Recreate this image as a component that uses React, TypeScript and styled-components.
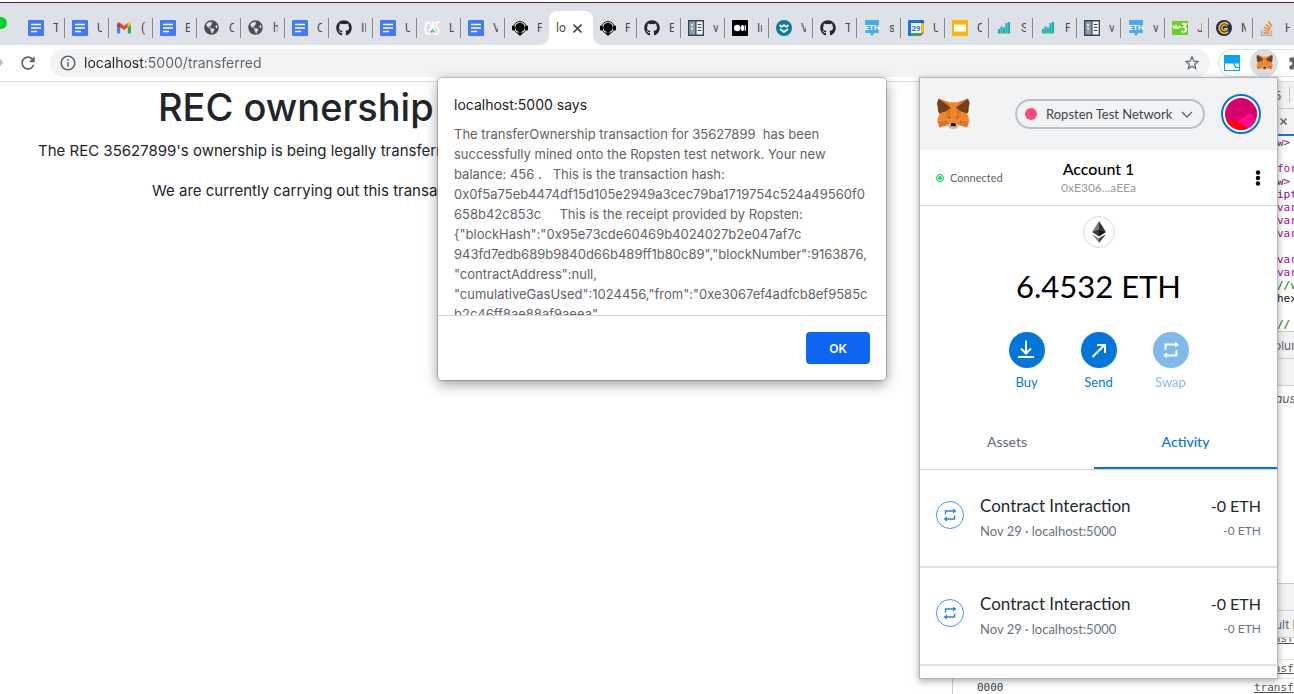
import React from 'react';
import styled, { createGlobalStyle } from 'styled-components';
import { FaGithub, FaGlobeAmericas } from 'react-icons/fa';
import { MdStarBorder, MdRefresh, MdInfoOutline, MdExtension } from 'react-icons/md';

const GlobalStyle = createGlobalStyle`
  *, *::before, *::after { box-sizing: border-box; }
  body { margin: 0; background: #fff; font-family: Inter, "Liberation Sans", sans-serif; overflow: hidden; }
  button { font: inherit; border: 0; padding: 0; background: none; cursor: pointer; }
  svg { display: block; flex: none; }
`;

/* ---------- browser frame ---------- */

const Browser = styled.div`
  position: relative;
  display: flex;
  flex-direction: column;
  height: 100vh;
  overflow: hidden;
`;

const TabStrip = styled.header`
  flex: none;
  display: flex;
  align-items: flex-end;
  height: 45px;
  overflow: hidden;
  border-top: 2px solid #fff;
  background: #dee1e7;
  box-shadow: inset 0 1px #45282f;
`;

const WindowControls = styled.div`
  flex: none;
  align-self: center;
  width: 21px;
  height: 14px;
  overflow: hidden;

  &::before {
    content: '';
    display: block;
    width: 12px;
    height: 12px;
    margin-left: -5px;
    border-radius: 50%;
    background: #05cf2b;
  }
`;

const Tab = styled.button<{ $divider: boolean }>`
  flex: none;
  display: flex;
  align-items: center;
  gap: 9px;
  width: 44px;
  height: 34px;
  padding-left: 7px;
  color: #4a4d52;
  font-family: Roboto, "Liberation Sans", sans-serif;
  font-size: 12px;

  &::after {
    content: '';
    width: 1px;
    height: 20px;
    margin-left: auto;
    background: ${(p) => (p.$divider ? '#85888d' : 'transparent')};
  }
`;

const TabTitle = styled.span`
  width: 5px;
  margin-right: -9px;
  overflow: hidden;
  text-align: left;
  white-space: nowrap;
`;

const ActiveTab = styled.div`
  position: relative;
  flex: none;
  display: flex;
  align-items: center;
  gap: 7px;
  width: 44px;
  height: 34px;
  padding-left: 7px;
  border-radius: 8px 8px 0 0;
  background: #fff;
  color: #45484d;
  font-family: Roboto, "Liberation Sans", sans-serif;
  font-size: 12px;

  &::before, &::after {
    content: '';
    position: absolute;
    bottom: 0;
    width: 8px;
    height: 8px;
  }
  &::before { right: 100%; background: radial-gradient(circle at 0 0, transparent 7px, #fff 8px); }
  &::after { left: 100%; background: radial-gradient(circle at 100% 0, transparent 7px, #fff 8px); }
`;

const Toolbar = styled.div`
  flex: none;
  display: flex;
  align-items: center;
  height: 37px;
  padding-bottom: 1px;
  border-bottom: 1px solid #d9dbdd;
  color: #5f6368;
`;

const Forward = styled.span`
  width: 18px;
  height: 8px;

  &::before {
    content: '';
    display: block;
    width: 3px;
    height: 8px;
    background: #b9bbbe;
    clip-path: polygon(0 0, 100% 50%, 0 100%);
  }
`;

const Omnibox = styled.div`
  flex: 1;
  display: flex;
  align-items: center;
  height: 28px;
  margin: 0 8px 0 12px;
  padding: 0 9px;
  border-radius: 14px;
  background: #f1f3f4;
`;

const Url = styled.input`
  flex: 1;
  min-width: 0;
  margin-left: 7px;
  padding: 0;
  border: 0;
  outline: 0;
  font: 14px Inter, sans-serif;
  color: transparent;
  background: linear-gradient(to right, #202124 60px, #5f6368 60px);
  background-clip: text;
  -webkit-background-clip: text;
`;

const Extensions = styled.div`
  display: flex;
  align-items: center;
  gap: 9px;
  width: 76px;
  height: 28px;
  padding-left: 4px;
  overflow: hidden;
  border: 1px solid #dfe1e5;
  border-right: 0;
  border-radius: 14px 0 0 14px;
`;

const Extension = styled.button<{ $open?: boolean }>`
  flex: none;
  display: grid;
  place-items: center;
  width: ${(p) => (p.$open ? '28px' : '18px')};
  height: 28px;
  border-radius: 50%;
  background: ${(p) => (p.$open ? '#dcdddf' : 'none')};
  color: #5f6368;
`;

/* ---------- page ---------- */

const Viewport = styled.div`
  flex: 1;
  display: flex;
  min-height: 0;
`;

const Page = styled.main`
  flex: 1;
  min-width: 0;
  padding-top: 1px;
  overflow: hidden;
  color: #212529;
  white-space: nowrap;
`;

const Title = styled.h1`
  margin: 0 0 8px;
  padding-left: 158px;
  font-size: 38px;
  font-weight: 500;
  line-height: 48px;
`;

const Text = styled.p<{ $indent: number }>`
  margin: 0 0 16px;
  padding-left: ${(p) => p.$indent}px;
  font-size: 15px;
  line-height: 24px;
`;

/* ---------- developer tools ---------- */

const DevTools = styled.aside`
  flex: none;
  display: flex;
  flex-direction: column;
  width: 342px;
  overflow: hidden;
  border-left: 1px solid #cacdd1;
  color: #5f6368;
  font-size: 12px;
  white-space: nowrap;
`;

const Bar = styled.div<{ $height: number; $pad: number }>`
  flex: none;
  display: flex;
  align-items: center;
  gap: 8px;
  height: ${(p) => p.$height}px;
  padding-left: ${(p) => p.$pad}px;
  border-bottom: 1px solid #cacdd1;
  background: #f3f3f3;
`;

const BarRule = styled.span`
  width: 1px;
  height: 16px;
  background: #c4c6ca;
`;

const FileTab = styled(Bar)`
  border-bottom: 2px solid #1a73e8;
`;

const Code = styled.pre`
  flex: none;
  height: 196px;
  margin: 0;
  padding-left: 324px;
  overflow: hidden;
  border-bottom: 1px solid #cacdd1;
  color: #202124;
  font: 11px/13px "DejaVu Sans Mono", monospace;
`;

const CodeLine = styled.span<{ $kind: string }>`
  display: block;
  height: 13px;
  color: ${(p) => ({ tag: '#881280', key: '#aa0d91', note: '#007400', plain: '#202124' })[p.$kind]};
`;

const Paused = styled.div`
  flex: none;
  height: 198px;
  padding: 5px 0 0 322px;
  border-bottom: 1px solid #cacdd1;
  font-style: italic;
  line-height: 16px;
`;

const LogRow = styled.div<{ $clipped?: boolean }>`
  flex: none;
  display: flex;
  justify-content: space-between;
  height: ${(p) => (p.$clipped ? '22px' : '19px')};
  padding: 0 0 0 24px;
  overflow: hidden;
  border-bottom: 1px solid #e4e4e4;
  color: #303942;
  font: 11px/18px "DejaVu Sans Mono", monospace;
  line-height: ${(p) => (p.$clipped ? '2px' : '18px')};

  a { width: 40px; color: #545454; }
`;

/* ---------- alert ---------- */

const Alert = styled.section`
  position: absolute;
  top: 78px;
  left: calc(50% - 209px);
  width: 448px;
  border-radius: 4px;
  background: #fff;
  box-shadow: 0 0 1px 1px rgba(0, 0, 0, 0.22), 0 4px 14px rgba(0, 0, 0, 0.4);
`;

const AlertTitle = styled.h2`
  margin: 0;
  padding: 17px 16px 9px;
  color: #202124;
  font-size: 14px;
  font-weight: 400;
  line-height: 20px;
`;

const AlertBody = styled.div`
  height: 192px;
  padding: 0 16px;
  overflow: hidden;
  border-bottom: 1px solid #d4d6d9;
  color: #5f6368;
  font-size: 13px;
  line-height: 20px;
  white-space: pre;
`;

const AlertActions = styled.div`
  display: flex;
  justify-content: flex-end;
  padding: 16px;
`;

const OkButton = styled.button`
  width: 64px;
  height: 32px;
  border-radius: 4px;
  background: #0d66f2;
  color: #fff;
  font-size: 12px;
  font-weight: 600;
`;

/* ---------- wallet popup ---------- */

const Wallet = styled.section`
  position: absolute;
  top: 77px;
  right: 16px;
  width: 359px;
  height: 602px;
  border: 1px solid #b3b5b7;
  background: #fff;
  color: #000;
  font-family: Lato, "Liberation Sans", sans-serif;
  box-shadow: 0 2px 7px rgba(0, 0, 0, 0.35);
`;

const WalletHeader = styled.header`
  display: flex;
  align-items: center;
  height: 72px;
  padding: 0 16px;
  background: #f2f3f4;
`;

const Network = styled.label`
  display: flex;
  align-items: center;
  width: 190px;
  height: 30px;
  margin: 0 16px 0 auto;
  padding: 0 10px 0 8px;
  border: 2px solid #bbc0c5;
  border-radius: 15px;

  &::before {
    content: '';
    width: 12px;
    height: 12px;
    border-radius: 50%;
    background: #ff4a78;
  }

  select {
    flex: 1;
    appearance: none;
    margin: 0;
    padding: 0 0 0 9px;
    border: 0;
    outline: 0;
    background: none;
    color: #3f464c;
    font: 13px Lato, sans-serif;
  }
`;

const Avatar = styled.button`
  display: grid;
  place-items: center;
  width: 40px;
  height: 40px;
  border: 2px solid #0376d9;
  border-radius: 50%;
  background: #fff;
`;

const AccountBar = styled.div`
  display: grid;
  grid-template-columns: 1fr auto 1fr;
  align-items: center;
  height: 56px;
  padding: 0 16px;
  border-bottom: 1px solid #d2d4d6;
`;

const Connected = styled.span`
  display: flex;
  align-items: center;
  gap: 6px;
  color: #5f666d;
  font-size: 11px;

  &::before {
    content: '';
    width: 8px;
    height: 8px;
    border: 1px solid #1fd660;
    border-radius: 50%;
    background: #1fd660;
    box-shadow: inset 0 0 0 1px #fff;
  }
`;

const Account = styled.button`
  text-align: center;
  font-size: 16px;
  font-weight: 500;
  line-height: 20px;

  small { display: block; color: #989a9d; font-size: 12px; font-weight: 400; line-height: 18px; }
`;

const More = styled.button`
  justify-self: end;
  width: 6px;
`;

const Overview = styled.div`
  display: flex;
  flex-direction: column;
  align-items: center;
  padding-top: 10px;
`;

const Token = styled.div`
  display: grid;
  place-items: center;
  width: 32px;
  height: 32px;
  border: 1px solid #d8dadc;
  border-radius: 50%;
`;

const Balance = styled.div`
  margin: 18px 0 26px;
  font-size: 31px;
  line-height: 40px;
`;

const Actions = styled.div`
  display: flex;
`;

const Action = styled.button<{ $muted?: boolean }>`
  display: flex;
  flex-direction: column;
  align-items: center;
  gap: 4px;
  width: 72px;
  color: #0376d9;
  font-size: 13px;
  line-height: 20px;
  opacity: ${(p) => (p.$muted ? 0.5 : 1)};
`;

const WalletTabs = styled.div`
  display: flex;
  margin-top: 23px;
  border-bottom: 1px solid #d2d4d6;
`;

const WalletTab = styled.button<{ $active?: boolean }>`
  flex: ${(p) => (p.$active ? '183 0 0' : '174 0 0')};
  height: 54px;
  border-bottom: 2px solid ${(p) => (p.$active ? '#0376d9' : 'transparent')};
  color: ${(p) => (p.$active ? '#0376d9' : '#6a737d')};
  font-size: 14px;
  font-weight: 500;
`;

const Activity = styled.article`
  display: flex;
  height: 98px;
  padding: 24px 16px 0;
  border-bottom: 2px solid #e2e3e4;
`;

const Badge = styled.div`
  display: grid;
  place-items: center;
  width: 28px;
  height: 28px;
  margin: 7px 16px 0 0;
  border: 1px solid #4a90f2;
  border-radius: 50%;
  color: #2f80ed;
`;

const Lines = styled.div<{ $right?: boolean }>`
  margin-left: ${(p) => (p.$right ? 'auto' : 0)};
  text-align: ${(p) => (p.$right ? 'right' : 'left')};
  color: #24292e;
  font-size: ${(p) => (p.$right ? '16px' : '17px')};
  line-height: 24px;

  small { display: block; color: #6a737d; font-size: ${(p) => (p.$right ? '12px' : '13px')}; line-height: 26px; }
`;

/* ---------- drawings ---------- */

const FOX: [string, string][] = [
  ['#E17726', 'M32.958 1l-13.134 9.718 2.442-5.727z'],
  ['#E27625', 'M2.663 1l13.017 9.809-2.325-5.818zM28.23 23.533l-3.495 5.338 7.483 2.06 2.143-7.282zM1.273 23.65l2.13 7.282 7.47-2.06-3.482-5.339zM10.47 14.515l-2.079 3.13 7.405.338-.247-7.97zM25.151 14.515l-5.16-4.593-.169 8.06 7.405-.336zM10.873 28.871l4.482-2.164-3.86-3.006zM20.265 26.707l4.47 2.164-.61-5.17z'],
  ['#D5BFB2', 'M24.735 28.871l-4.47-2.164.364 2.904-.039 1.231zM10.873 28.871l4.158 1.97-.026-1.23.35-2.904z'],
  ['#F5841F', 'M32.049 16.52l-6.898-2.009 2.078 3.13-3.09 6.055 4.106-.052h6.13zM10.47 14.515l-6.898 2.01-2.3 7.124h6.119l4.105.052-3.09-6.055zM19.824 17.983l.442-7.593 2-5.403h-8.911l2 5.403.442 7.593.169 2.388.013 5.882h3.676l.013-5.882z'],
  ['#E8761B', 'M27.229 17.645l-7.405.338.689 3.8 1.091-2.29 2.65 1.205zM11.38 20.698l2.637-1.205 1.091 2.29.69-3.8-7.407-.337zM8.391 17.645l3.09 6.052-.104-2.999zM24.255 20.698l-.117 2.999 3.09-6.052zM15.797 17.983l-.689 3.8.87 4.476.195-5.896zM19.824 17.983l-.363 2.367.182 5.91.87-4.476z'],
  ['#CC6228', 'M10.873 28.871l.65-5.338-4.132.117zM24.098 23.533l.637 5.338 3.495-5.221z'],
  ['#F5841F', 'M20.513 21.784l-.87 4.476.622.448 3.86-3.007.117-3zM11.38 20.698l.104 2.999 3.86 3.007.624-.448-.87-4.476z'],
  ['#7a4a2a', 'M15.108 21.784l-3.728-1.086 2.637-1.205zM20.513 21.784l1.091-2.291 2.65 1.205z'],
  ['#C0AC9D', 'M20.59 30.842l.039-1.231-.338-.285h-4.962l-.325.285.026 1.23-4.158-1.97 1.455 1.193 2.949 2.035h5.053l2.962-2.035 1.442-1.192z'],
  ['#161616', 'M20.265 26.707l-.623-.448h-3.676l-.623.448-.35 2.904.325-.285h4.962l.338.285z'],
  ['#763E1A', 'M33.517 11.353l1.104-5.364L32.958.99l-12.693 9.394 4.885 4.127 6.898 2.01 1.52-1.776-.663-.48 1.053-.957-.806-.622 1.052-.803zM1 5.989l1.117 5.364-.714.532 1.065.803-.805.622 1.052.957-.663.48 1.52 1.775 6.899-2.01 4.884-4.127L2.663.99z'],
];

const Fox = ({ size }: { size: number }) => (
  <svg width={size} height={size} viewBox="0 0 35 34">
    {FOX.map(([fill, d], i) => <path key={i} fill={fill} d={d} />)}
  </svg>
);

const Swap = () => (
  <svg width="16" height="16" viewBox="0 0 16 16" fill="none" stroke="currentColor" strokeWidth="1.400">
    <path d="M3.500 7.500V4H12M12.500 8.500V12H4" />
    <path d="M11 1.500L14.500 4 11 6.500zM5 9.500L1.500 12 5 14.500z" fill="currentColor" stroke="none" />
  </svg>
);

const Circle = ({ children }: { children: React.ReactNode }) => (
  <svg width="36" height="36" viewBox="0 0 36 36" fill="none" stroke="#fff" strokeWidth="2">
    <circle cx="18" cy="18" r="18" fill="#0376d9" stroke="none" />
    {children}
  </svg>
);

type IconName = 'docs' | 'gmail' | 'globe' | 'github' | 'cas' | 'support' | 'book' | 'medium' | 'wave' | 'eth' | 'calendar' | 'slides' | 'bars' | 'w3' | 'coin' | 'stack';

const iconFont = 'Roboto, sans-serif';
const ICONS: Record<IconName, React.ReactNode> = {
  docs: <><rect width="16" height="16" rx="1" fill="#4279fb" /><path d="M3 4.500h10M3 8h10M3 11.500h6" stroke="#fff" strokeWidth="1.700" /></>,
  gmail: (
    <>
      <path d="M1 4v9.500h3.200V7z" fill="#4285f4" /><path d="M15 4v9.500h-3.200V7z" fill="#34a853" />
      <path d="M1 4.500C1 2.500 3 2 4.200 3L8 6l3.800-3v4.200L8 10 4.200 7.200 1 4.800z" fill="#ea4335" />
      <path d="M11.800 3C13 2 15 2.500 15 4.500v.8l-3.200 2.300z" fill="#fbbc04" /><path d="M1 4.500v.8l3.200 2.300V5z" fill="#c5221f" />
    </>
  ),
  globe: <g color="#4b4f54"><FaGlobeAmericas size={15} /></g>,
  github: <g color="#24292f"><FaGithub size={16} /></g>,
  cas: (
    <>
      <g fill="none" stroke="#fff" strokeWidth="1.900">
        <path d="M6 3.500C4 .500 1.500 3 1.200 8c-.2 5 1.500 7 3.300 5" />
        <path d="M5.500 15L9 1.500 10.300 15" />
        <path d="M15.500 2.500c-2-1.500-3.500.500-3.300 3 .3 2.500 2.800 3 2.600 5.500-.2 3-2 4-4 2.800" />
      </g>
      <path d="M6.500 12.500l2-2.500 2 2.500" stroke="#2ecc50" strokeWidth="1.400" fill="none" />
    </>
  ),
  support: (
    <>
      <circle cx="8" cy="7.500" r="6.200" fill="none" stroke="#222" strokeWidth="1" /><circle cx="8" cy="7.500" r="4.700" fill="#000" />
      <rect x="0" y="5.500" width="2.800" height="5" rx="1" /><rect x="13.200" y="5.500" width="2.800" height="5" rx="1" />
      <path d="M5 13l3-1 3 1-3 3z" />
    </>
  ),
  book: <><path d="M0 0h16v16H0z" fill="#37474f" /><path d="M1.300 1.500h6v13h-6z" fill="#8ba0ae" /><path d="M8.500 1.500h6.200v13H8.500z" fill="#f3f5f6" /><path d="M3 4h2v2H3zM3 7.500h2v2H3z" fill="#dfe6ea" /><path d="M9.800 4.500h3.500M9.800 7.500h3.500M9.800 10.500h3.500" stroke="#37474f" strokeWidth="1.200" /></>,
  medium: <><rect width="16" height="16" rx="1" /><circle cx="5.200" cy="8" r="3.300" fill="#fff" /><ellipse cx="10.500" cy="8" rx="1.600" ry="3.100" fill="#fff" /><path d="M13.300 5.200v5.600" stroke="#fff" strokeWidth="1.200" /></>,
  wave: <><circle cx="8" cy="8" r="8" fill="#0b7c9b" /><path d="M3.500 5l2.200 1.800L8 5l2.300 1.800L12.500 5M4 9l2 1.500h0L8 12l2-1.500L12 9" stroke="#fff" strokeWidth="1.700" fill="none" /></>,
  eth: <><path d="M1 0h14v13h-4.500L8 16l-2-3H1z" fill="#47aee4" /><text x="8" y="9.500" textAnchor="middle" fontFamily={iconFont} fontWeight="700" fontSize="8" fill="#fff">ETH</text></>,
  calendar: <><path d="M0 1q0-1 1-1h12v3H3v13H1q-1 0-1-1z" fill="#1a73e8" /><path d="M12.500 0H15q1 0 1 1v2.500h-3.500z" fill="#1565c0" /><path d="M13 3.500h3v9h-3z" fill="#fbbc04" /><path d="M3 13h10v3H3z" fill="#34a853" /><path d="M13 12.500h3L12.800 16z" fill="#ea4335" /><path d="M3 3h10v10H3z" fill="#fff" /><text x="8" y="11" textAnchor="middle" fontFamily={iconFont} fontWeight="700" fontSize="8" fill="#1a73e8">29</text></>,
  slides: <><rect width="16" height="16" rx="1" fill="#fbb604" /><path d="M2 4.500h12v7H2z" fill="#fff" /></>,
  bars: <path d="M3 13.500V9M5.500 13.500V6.500M8 13.500V7.500M10.500 13.500V3M13 13.500V2" stroke="#20b2b0" strokeWidth="2.200" />,
  w3: <><path d="M0 1h16v14H0z" fill="#70cf24" /><path d="M1 5.500c1 3.500 2 3.500 3 .8 1 2.700 2.200 2.500 3.200.2l2 .5" stroke="#fff" fill="none" strokeWidth="1.600" /><path d="M10 4h4L11.800 7c3 0 3 5-.3 5-1 0-1.500-.5-2-1.200" stroke="#fff" fill="none" strokeWidth="1.700" /></>,
  coin: <><circle cx="8" cy="8" r="8" fill="#1b2c56" /><path d="M12.500 4.500a5.300 5.300 0 1 0 0 7" stroke="#f5b91a" strokeWidth="1.800" fill="none" /><path d="M11 6.500a2.800 2.800 0 1 0 .2 2.200H8" stroke="#f5b91a" strokeWidth="1.400" fill="none" /></>,
  stack: <><path d="M1.500 10.500v5h10v-5" stroke="#a9abae" strokeWidth="1.300" fill="none" /><path d="M3.500 13h6M3.600 10.400l6 .7M4.200 7.500l5.700 2M5.800 4.500l5 3.600M8.500 1.500l3.500 5" stroke="#f48024" strokeWidth="1.400" /></>,
};

const TabIcon = ({ name }: { name: IconName }) => <svg width="16" height="16" viewBox="0 0 16 16">{ICONS[name]}</svg>;

/* ---------- data ---------- */

const LEFT_TABS: [IconName, string][] = [
  ['docs', 'T'], ['docs', 'U'], ['gmail', '('], ['docs', 'E'], ['globe', 'C'], ['globe', 'h'],
  ['docs', 'C'], ['github', 'II'], ['docs', 'U'], ['cas', 'L'], ['docs', 'V'], ['support', 'F'],
];
const RIGHT_TABS: [IconName, string][] = [
  ['support', 'F'], ['github', 'E'], ['book', 'v'], ['medium', 'In'], ['wave', 'V'], ['github', 'T'],
  ['eth', 's'], ['calendar', 'U'], ['slides', 'C'], ['bars', 'S'], ['bars', 'F'], ['book', 'v'],
  ['eth', 'v'], ['w3', 'J'], ['coin', 'M'], ['stack', 'H'],
];

const ALERT_TEXT = [
  'The transferOwnership transaction for 35627899  has been',
  'successfully mined onto the Ropsten test network. Your new',
  'balance: 456 .   This is the transaction hash:',
  '0x0f5a75eb4474df15d105e2949a3cec79ba1719754c524a49560f0',
  '658b42c853c     This is the receipt provided by Ropsten:',
  '{"blockHash":"0x95e73cde60469b4024027b2e047af7c',
  '943fd7edb689b9840d66b489ff1b80c89","blockNumber":9163876,',
  '"contractAddress":null,',
  '"cumulativeGasUsed":1024456,"from":"0xe3067ef4adfcb8ef9585c',
  'b2c46ff8ae88af9aeea"',
].join('\n');

const CODE: [string, string][] = [
  ['tag', 'w>'], ['plain', ''], ['key', 'for'], ['tag', 'w>'], ['tag', 'ipt'], ['key', 'var'], ['key', 'var'], ['key', 'var'],
  ['plain', ''], ['key', 'var'], ['key', 'var'], ['note', '//v'], ['plain', 'hex'], ['plain', ''], ['note', '// '],
];

export default function App() {
  return (
    <Browser>
      <GlobalStyle />
      <TabStrip>
        <WindowControls />
        {LEFT_TABS.map(([icon, title], i) => (
          <Tab key={i} $divider={i < LEFT_TABS.length - 1}><TabIcon name={icon} /><TabTitle>{title}</TabTitle></Tab>
        ))}
        <ActiveTab>
          <span>lo</span>
          <button aria-label="Close tab">
            <svg width="9" height="9" viewBox="0 0 9 9" stroke="#45484d" strokeWidth="1.600"><path d="M.5.500l8 8M8.500.500l-8 8" /></svg>
          </button>
        </ActiveTab>
        {RIGHT_TABS.map(([icon, title], i) => (
          <Tab key={i} $divider><TabIcon name={icon} /><TabTitle>{title}</TabTitle></Tab>
        ))}
      </TabStrip>

      <Toolbar>
        <Forward />
        <button aria-label="Reload"><MdRefresh size={20} color="#5f6368" /></button>
        <Omnibox>
          <MdInfoOutline size={18} />
          <Url aria-label="Address" defaultValue="localhost:5000/transferred" />
          <MdStarBorder size={18} />
        </Omnibox>
        <Extensions>
          <Extension aria-label="Window extension">
            <svg width="16" height="16" viewBox="0 0 16 16"><path d="M0 0h16v16H0z" fill="#08a5f5" /><path d="M1 8.500h8l2.500 4.500H15v2H1z" fill="#fff" /><path d="M10.500 8.500H15V12h-2.500z" fill="#fff" /></svg>
          </Extension>
          <Extension $open aria-label="Wallet"><Fox size={17} /></Extension>
          <Extension aria-label="Extensions"><MdExtension size={17} /></Extension>
        </Extensions>
      </Toolbar>

      <Viewport>
        <Page>
          <Title>REC ownership</Title>
          <Text $indent={38}>The REC 35627899's ownership is being legally transferred</Text>
          <Text $indent={152}>We are currently carrying out this transaction</Text>
        </Page>
        <DevTools>
          <Bar $height={27} $pad={321}>5<BarRule /></Bar>
          <FileTab $height={27} $pad={327}>
            <svg width="7" height="7" viewBox="0 0 7 7" stroke="#5f6368" strokeWidth="1.500"><path d="M.5.500l6 6M6.500.500l-6 6" /></svg>
          </FileTab>
          <Code>{CODE.map(([kind, text], i) => <CodeLine key={i} $kind={kind}>{text}</CodeLine>)}</Code>
          <Bar $height={27} $pad={321}>olumn</Bar>
          <Bar $height={27} $pad={321} />
          <Paused>ause</Paused>
          <Bar $height={27} $pad={321} />
          <Bar $height={27} $pad={322}>ult levels</Bar>
          <LogRow $clipped><span /><a href="#transf">transf</a></LogRow>
          <LogRow><span /><a href="#transf">transf</a></LogRow>
          <LogRow><span>0000</span><a href="#transf">transf</a></LogRow>
        </DevTools>
      </Viewport>

      <Alert role="alertdialog" aria-labelledby="alert-title">
        <AlertTitle id="alert-title">localhost:5000 says</AlertTitle>
        <AlertBody>{ALERT_TEXT}</AlertBody>
        <AlertActions><OkButton>OK</OkButton></AlertActions>
      </Alert>

      <Wallet>
        <WalletHeader>
          <Fox size={34} />
          <Network>
            <select aria-label="Network"><option>Ropsten Test Network</option></select>
            <svg width="12" height="7" viewBox="0 0 12 7" fill="none" stroke="#5b6268" strokeWidth="1.300"><path d="M1 1l5 5 5-5" /></svg>
          </Network>
          <Avatar aria-label="Account menu">
            <svg width="32" height="32" viewBox="0 0 32 32">
              <clipPath id="avatar"><circle cx="16" cy="16" r="16" /></clipPath>
              <g clipPath="url(#avatar)">
                <path d="M0 0h32v32H0z" fill="#d6006b" /><path d="M0 21l12 2 14 9H0z" fill="#ff0012" />
                <path d="M12 23l14-8 6 10-5 8z" fill="#ff0a8c" /><path d="M30.500 8H32v14z" fill="#f0113c" />
              </g>
            </svg>
          </Avatar>
        </WalletHeader>
        <AccountBar>
          <Connected>Connected</Connected>
          <Account>Account 1<small>0xE306...aEEa</small></Account>
          <More aria-label="Account options">
            <svg width="6" height="16" viewBox="0 0 6 16"><circle cx="3" cy="2.500" r="2.200" /><circle cx="3" cy="8" r="2.200" /><circle cx="3" cy="13.500" r="2.200" /></svg>
          </More>
        </AccountBar>
        <Overview>
          <Token>
            <svg width="14" height="22" viewBox="0 0 14 22">
              <path d="M7 0v8L0 11z" fill="#7d7d7d" /><path d="M7 0l7 11-7-3z" fill="#343434" />
              <path d="M7 8v7.500L0 11z" fill="#3c3c3b" /><path d="M7 8l7 3-7 4.500z" fill="#141414" />
              <path d="M0 13l7 4.200V22z" fill="#8c8c8c" /><path d="M14 13l-7 4.200V22z" fill="#3c3c3b" />
            </svg>
          </Token>
          <Balance>6.4532 ETH</Balance>
          <Actions>
            <Action><Circle><path d="M17 8.500v13M12 16.500l5 5 5-5M9 25h16" /></Circle>Buy</Action>
            <Action><Circle><path d="M11.500 25L24 12.500M16 13h8v8" /></Circle>Send</Action>
            <Action $muted disabled>
              <Circle><path d="M12.500 18v-5.500H23M23.500 18v5.500H13" /><path d="M22 9.500l4 3-4 3zM14 20.500l-4 3 4 3z" fill="#fff" stroke="none" /></Circle>Swap
            </Action>
          </Actions>
        </Overview>
        <WalletTabs>
          <WalletTab>Assets</WalletTab>
          <WalletTab $active>Activity</WalletTab>
        </WalletTabs>
        {[0, 1].map((i) => (
          <Activity key={i}>
            <Badge><Swap /></Badge>
            <Lines>Contract Interaction<small>Nov 29 · localhost:5000</small></Lines>
            <Lines $right>-0 ETH<small>-0 ETH</small></Lines>
          </Activity>
        ))}
      </Wallet>
    </Browser>
  );
}
